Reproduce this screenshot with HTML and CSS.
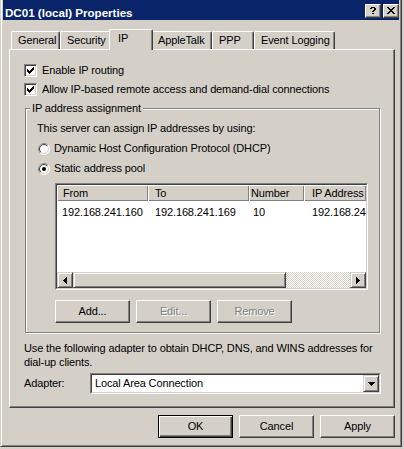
FILE: index.html
```html
<!DOCTYPE html>
<html>
<head>
<meta charset="utf-8">
<title>DC01 (local) Properties</title>
<link rel="stylesheet" href="styles.css">
</head>
<body>
<div class="window">
  <div class="titlebar">
    <span class="title">DC01 (local) Properties</span>
    <div class="caption-btns">
      <span class="cap-btn"><svg width="6" height="7" viewBox="0 0 6 7" shape-rendering="crispEdges"><path d="M1 0h4v1H1z M0 1h2v1H0z M4 1h2v2H4z M3 3h2v1H3z M2 4h2v1H2z M2 6h2v1H2z" fill="#000"/></svg></span>
      <span class="cap-btn"><svg width="8" height="7" viewBox="0 0 8 7" shape-rendering="crispEdges"><path d="M0 0h2v1H0z M6 0h2v1H6z M1 1h2v1H1z M5 1h2v1H5z M2 2h4v1H2z M3 3h2v1H3z M2 4h4v1H2z M1 5h2v1H1z M5 5h2v1H5z M0 6h2v1H0z M6 6h2v1H6z" fill="#000"/></svg></span>
    </div>
  </div>
  <div class="client">
    <div class="tabs">
      <div class="tab t-general">General</div>
      <div class="tab t-security">Security</div>
      <div class="tab t-ip active">IP</div>
      <div class="tab t-apple">AppleTalk</div>
      <div class="tab t-ppp">PPP</div>
      <div class="tab t-event">Event Logging</div>
    </div>
    <div class="panel">
      <label class="check-row">
        <span class="checkbox"><svg width="7" height="7" viewBox="0 0 7 7" shape-rendering="crispEdges"><path d="M0 2h1v3H0z M1 3h1v3H1z M2 4h1v3H2z M3 3h1v3H3z M4 2h1v3H4z M5 1h1v3H5z M6 0h1v3H6z" fill="#000"/></svg></span>
        <span>Enable IP routing</span>
      </label>
      <label class="check-row second">
        <span class="checkbox"><svg width="7" height="7" viewBox="0 0 7 7" shape-rendering="crispEdges"><path d="M0 2h1v3H0z M1 3h1v3H1z M2 4h1v3H2z M3 3h1v3H3z M4 2h1v3H4z M5 1h1v3H5z M6 0h1v3H6z" fill="#000"/></svg></span>
        <span>Allow IP-based remote access and demand-dial connections</span>
      </label>
      <fieldset class="group">
        <legend>IP address assignment</legend>
        <div class="group-body">
          <div class="line">This server can assign IP addresses by using:</div>
          <div class="radio-row">
            <svg class="radio" width="12" height="12" viewBox="0 0 12 12"><circle cx="6" cy="6" r="5.5" fill="#fff" stroke="#fff"/><path d="M2.1 9.9A5.5 5.5 0 0 1 9.9 2.1" fill="none" stroke="#808080"/><circle cx="6" cy="6" r="4.5" fill="#fff" stroke="#d4d0c8"/><path d="M2.8 9.2A4.5 4.5 0 0 1 9.2 2.8" fill="none" stroke="#404040"/></svg>
            <span>Dynamic Host Configuration Protocol (DHCP)</span>
          </div>
          <div class="radio-row">
            <svg class="radio" width="12" height="12" viewBox="0 0 12 12"><circle cx="6" cy="6" r="5.5" fill="#fff" stroke="#fff"/><path d="M2.1 9.9A5.5 5.5 0 0 1 9.9 2.1" fill="none" stroke="#808080"/><circle cx="6" cy="6" r="4.5" fill="#fff" stroke="#d4d0c8"/><path d="M2.8 9.2A4.5 4.5 0 0 1 9.2 2.8" fill="none" stroke="#404040"/><circle cx="6" cy="6" r="2" fill="#000"/></svg>
            <span>Static address pool</span>
          </div>
          <div class="listview">
            <div class="lv-inner">
              <div class="lv-content">
                <div class="lv-header">
                  <div class="hd c1">From</div>
                  <div class="hd c2">To</div>
                  <div class="hd c3">Number</div>
                  <div class="hd c4">IP Address</div>
                </div>
                <div class="lv-row">
                  <div class="cell c1">192.168.241.160</div>
                  <div class="cell c2">192.168.241.169</div>
                  <div class="cell c3">10</div>
                  <div class="cell c4">192.168.241.160</div>
                </div>
              </div>
              <div class="hscroll">
                <span class="sb-btn"><svg width="4" height="7" viewBox="0 0 4 7" shape-rendering="crispEdges"><path d="M3 0h1v7H3z M2 1h1v5H2z M1 2h1v3H1z M0 3h1v1H0z" fill="#000"/></svg></span>
                <span class="sb-thumb"></span>
                <span class="sb-track"></span>
                <span class="sb-btn"><svg width="4" height="7" viewBox="0 0 4 7" shape-rendering="crispEdges"><path d="M0 0h1v7H0z M1 1h1v5H1z M2 2h1v3H2z M3 3h1v1H3z" fill="#000"/></svg></span>
              </div>
            </div>
          </div>
          <div class="btn-row">
            <button class="btn">Add...</button>
            <button class="btn disabled">Edit...</button>
            <button class="btn disabled">Remove</button>
          </div>
        </div>
      </fieldset>
      <p class="note">Use the following adapter to obtain DHCP, DNS, and WINS addresses for<br>dial-up clients.</p>
      <div class="adapter-row">
        <span class="adapter-label">Adapter:</span>
        <div class="combo">
          <div class="combo-inner">
            <span class="combo-text">Local Area Connection</span>
            <span class="combo-btn"><svg width="7" height="4" viewBox="0 0 7 4" shape-rendering="crispEdges"><path d="M0 0h7v1H0z M1 1h5v1H1z M2 2h3v1H2z M3 3h1v1H3z" fill="#000"/></svg></span>
          </div>
        </div>
      </div>
    </div>
    <div class="footer">
      <button class="btn default">OK</button>
      <button class="btn">Cancel</button>
      <button class="btn">Apply</button>
    </div>
  </div>
</div>
</body>
</html>
```
FILE: styles.css
```css
* { box-sizing: border-box; }
html, body { margin: 0; padding: 0; }
body {
  width: 404px;
  height: 449px;
  overflow: hidden;
  background: #d4d0c8;
  font-family: "Liberation Sans", Arial, sans-serif;
  font-size: 11px;
  letter-spacing: -0.13px;
  line-height: 13px;
  color: #000;
}
.window {
  width: 402px;
  height: 447px;
  background: #d4d0c8;
  border-left: 1px solid #d4d0c8;
  border-right: 1px solid #404040;
  border-bottom: 1px solid #404040;
  box-shadow: inset 1px 0 #fff, inset -1px -1px #808080;
  padding: 0 0 0 2px;
  display: flex;
  flex-direction: column;
}
.titlebar {
  width: 396px;
  height: 20px;
  background: #0a246a;
  display: flex;
  justify-content: space-between;
  align-items: flex-start;
  padding-left: 2px;
}
.title {
  color: #fff;
  font-weight: bold;
  font-size: 11.6px;
  letter-spacing: 0;
  line-height: 13px;
  padding-top: 6px;
  white-space: nowrap;
}
.caption-btns {
  display: flex;
  gap: 2px;
  margin-top: 4px;
}
.cap-btn {
  width: 16px;
  height: 14px;
  background: #d4d0c8;
  border: 1px solid;
  border-color: #fff #404040 #404040 #fff;
  box-shadow: inset -1px -1px #808080;
  display: flex;
  align-items: center;
  justify-content: center;
  padding-bottom: 1px;
}
.client {
  width: 396px;
  padding: 9px 4px 0 6px;
  display: flex;
  flex-direction: column;
}
.tabs {
  height: 20px;
  display: flex;
  align-items: flex-end;
  padding-left: 2px;
}
.tab {
  height: 18px;
  flex: none;
  padding: 2px 0 0 6px;
  background: #d4d0c8;
  border-top: 1px solid #fff;
  border-left: 1px solid #fff;
  border-right: 1px solid #404040;
  box-shadow: inset -1px 0 #808080;
  border-radius: 2px 2px 0 0;
  white-space: nowrap;
}
.t-general { width: 49px; }
.t-security { width: 51px; }
.t-ip { width: 40px; }
.t-apple { width: 61px; }
.t-ppp { width: 42px; }
.t-event { width: 81px; }
.tab.active {
  width: 44px;
  height: 21px;
  margin: 0 -2px -1px -2px;
  padding-left: 8px;
  position: relative;
  z-index: 2;
}
.panel {
  width: 386px;
  height: 359px;
  border-top: 1px solid #fff;
  border-left: 1px solid #fff;
  border-right: 1px solid #404040;
  border-bottom: 1px solid #404040;
  box-shadow: inset -1px -1px #808080;
  padding: 14px 12px 0 14px;
  display: flex;
  flex-direction: column;
  align-items: flex-start;
}
.check-row {
  display: flex;
  align-items: center;
  gap: 5px;
  height: 13px;
  white-space: nowrap;
}
.check-row.second { margin-top: 6px; }
.checkbox {
  flex: none;
  width: 13px;
  height: 13px;
  background: #fff;
  border: 1px solid;
  border-color: #808080 #fff #fff #808080;
  box-shadow: inset 1px 1px #404040, inset -1px -1px #d4d0c8;
  padding: 2px 0 0 2px;
  display: flex;
  align-items: flex-start;
}
.group {
  margin: 6px 0 0 1px;
  padding: 0 0 9px 0;
  width: 355px;
  min-width: 0;
  border: 1px solid #808080;
  box-shadow: inset 1px 1px #fff, 1px 1px #fff;
}
.group legend {
  margin-left: 4px;
  padding: 0 2px;
  line-height: 13px;
  background: #d4d0c8;
}
.group-body {
  padding: 7px 0 0 11px;
  display: flex;
  flex-direction: column;
  align-items: flex-start;
}
.line { white-space: nowrap; }
.radio-row {
  margin-top: 7px;
  height: 13px;
  display: flex;
  align-items: center;
  gap: 4px;
  padding-left: 1px;
  white-space: nowrap;
}
.radio { flex: none; }
.listview {
  margin: 8px 0 0 18px;
  width: 313px;
  height: 107px;
  border: 1px solid;
  border-color: #808080 #fff #fff #808080;
}
.lv-inner {
  width: 100%;
  height: 100%;
  border: 1px solid;
  border-color: #404040 #d4d0c8 #d4d0c8 #404040;
  background: #fff;
  display: flex;
  flex-direction: column;
}
.lv-content {
  flex: 1;
  overflow: hidden;
}
.lv-header, .lv-row {
  display: flex;
  white-space: nowrap;
}
.hd {
  flex: none;
  height: 16px;
  padding-top: 2px;
  background: #d4d0c8;
  box-shadow: inset 1px 1px #fff, inset -1px -1px #808080;
  overflow: hidden;
}
.lv-row { padding-top: 5px; }
.cell { flex: none; overflow: hidden; }
.c1 { width: 91px; }
.c2 { width: 101px; }
.c3 { width: 55px; }
.c4 { width: 62px; }
.hd.c1 { padding-left: 6px; }
.hd.c2 { padding-left: 7px; }
.hd.c3 { padding-left: 2px; }
.hd.c4 { padding-left: 8px; }
.cell.c1 { padding-left: 5px; }
.cell.c2 { padding-left: 7px; }
.cell.c3 { padding-left: 4px; }
.cell.c4 { padding-left: 8px; }
.hscroll {
  height: 16px;
  display: flex;
  flex: none;
}
.sb-btn, .sb-thumb, .combo-btn {
  background: #d4d0c8;
  border: 1px solid;
  border-color: #d4d0c8 #404040 #404040 #d4d0c8;
  box-shadow: inset 1px 1px #fff, inset -1px -1px #808080;
}
.sb-btn {
  flex: none;
  width: 16px;
  height: 16px;
  display: flex;
  align-items: center;
  justify-content: center;
}
.sb-thumb { flex: none; width: 213px; height: 16px; }
.sb-track {
  flex: 1;
  height: 16px;
  background: repeating-conic-gradient(#fff 0 25%, #d4d0c8 0 50%) 0 0 / 2px 2px;
}
.btn-row {
  margin: 10px 0 0 18px;
  display: flex;
  gap: 6px;
}
.btn {
  width: 75px;
  height: 23px;
  padding: 0;
  margin: 0;
  font: inherit;
  letter-spacing: inherit;
  color: #000;
  background: #d4d0c8;
  border: 1px solid;
  border-color: #fff #404040 #404040 #fff;
  box-shadow: inset -1px -1px #808080;
  text-align: center;
}
.btn.disabled {
  color: #808080;
  text-shadow: 1px 1px #fff;
}
.btn.default {
  border-color: #000;
  box-shadow: inset 1px 1px #fff, inset -1px -1px #404040, inset -2px -2px #808080;
}
.note {
  margin: 8px 0 0 0;
  line-height: 14px;
  white-space: nowrap;
}
.adapter-row {
  margin-top: 4px;
  display: flex;
  align-items: center;
  height: 21px;
}
.adapter-label { width: 66px; flex: none; }
.combo {
  width: 291px;
  height: 21px;
  border: 1px solid;
  border-color: #808080 #fff #fff #808080;
}
.combo-inner {
  width: 100%;
  height: 100%;
  border: 1px solid;
  border-color: #404040 #d4d0c8 #d4d0c8 #404040;
  background: #fff;
  display: flex;
  align-items: center;
}
.combo-text { flex: 1; padding-left: 3px; }
.combo-btn {
  flex: none;
  width: 16px;
  height: 17px;
  display: flex;
  align-items: center;
  justify-content: center;
}
.footer {
  margin-top: 7px;
  display: flex;
  justify-content: flex-end;
  gap: 6px;
}
```
